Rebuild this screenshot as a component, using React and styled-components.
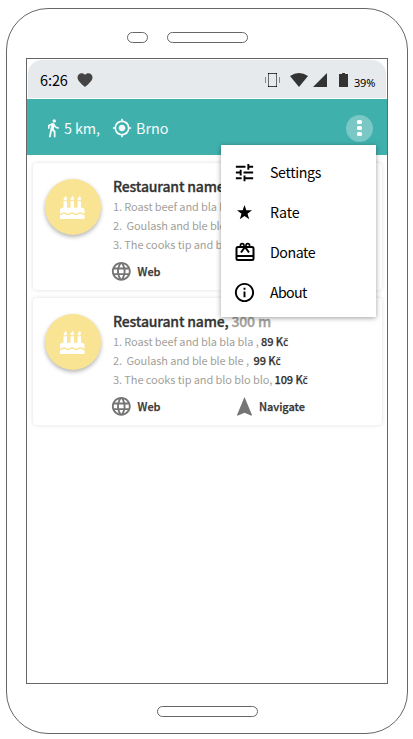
import React from "react";
import styled, { createGlobalStyle } from "styled-components";
import { MdDirectionsWalk, MdMyLocation, MdTune, MdInfoOutline, MdLanguage, MdFavorite } from "react-icons/md";
import { FaBirthdayCake } from "react-icons/fa";

const Global = createGlobalStyle`
  * { box-sizing: border-box; }
  body { margin: 0; background: #fff; font-family: "Source Sans Pro", "Noto Sans CJK SC", sans-serif; }
`;
const Phone = styled.main`
  width: 402px; height: 726px; margin: 8px 0 0 6px;
  border: 1px solid #666; border-radius: 42px;
  display: flex; flex-direction: column; align-items: center;
`;
const Speakers = styled.div`
  display: flex; gap: 19px; width: 100%; height: 49px; padding: 23px 0 0 119.5px;
`;
const Pill = styled.div`
  width: ${(p) => p.$w}px; height: 11px; border: 1px solid #666; border-radius: 6px;
`;
const Screen = styled.section`
  position: relative; width: 362px; height: 626px; border: 1px solid #666;
  display: flex; flex-direction: column; margin-bottom: 22px;
`;
const StatusBar = styled.header`
  height: 38px; margin: 1px 1px 1px; padding: 1px 10px 0 12px; background: #e6eaed;
  border-radius: 14px 14px 0 0; display: flex; align-items: center; color: #000;
`;
const Clock = styled.span`
  font-size: 14.5px; line-height: 20px; width: 36px; white-space: nowrap; letter-spacing: -0.1px;
`;
const StatusIcons = styled.div`
  margin-left: auto; display: flex; align-items: center; height: 20px;
`;
const Percent = styled.span`
  font: 11px/20px "Noto Sans", sans-serif; margin: 6px 0 0 6px; width: 22px;
  letter-spacing: -0.2px;
`;
const AppBar = styled.nav`
  height: 56px; background: #40b0ad; color: #f4fbfa; padding: 2px 14px 0 16px;
  display: flex; align-items: center; font-size: 14.4px; line-height: 20px;
`;
const Filter = styled.span`
  display: flex; align-items: center; gap: ${(p) => p.$gap}px; width: ${(p) => p.$w}px; white-space: nowrap;
  letter-spacing: ${(p) => p.$ls || 0}px;
`;
const MoreButton = styled.button`
  width: 27px; height: 27px; margin: 0 0 0 auto; padding: 0; border: 0; border-radius: 50%;
  background: #79c8c5; display: flex; flex-direction: column; align-items: center; justify-content: center; gap: 2px;
`;
const Dot = styled.i`
  width: 5px; height: 4px; border-radius: 1.5px; background: #fff;
`;
const List = styled.div`
  display: flex; flex-direction: column; gap: 8px; padding: 8px 5px 0 6px;
`;
const Card = styled.article`
  height: 127px; border-radius: 4px; background: #fff; box-shadow: 0 0 4px rgba(0,0,0,.13);
  padding: 15px 0 0 12px; display: flex; gap: 12px;
`;
const Avatar = styled.div`
  flex: none; width: 56px; height: 56px; margin-top: 1px; border-radius: 50%; background: #f9e494; color: #fff;
  box-shadow: 0 2px 4px rgba(0,0,0,.3); display: flex; align-items: center; justify-content: center;
`;
const Cake = styled(FaBirthdayCake)`
  width: 24.5px; height: 23.5px; margin: 1px 1px 0 0;
`;
const Details = styled.div`
  flex: 1; white-space: nowrap;
`;
const Name = styled.h2`
  margin: 0; font-size: 14px; line-height: 16px; height: 19px; font-weight: 500; color: #333;
  letter-spacing: -0.17px; -webkit-text-stroke: 0.3px currentColor;
`;
const Distance = styled.span`color: #a29f9a; -webkit-text-stroke: 0.3px currentColor;`;
const Meal = styled.p`
  margin: 0; font-size: 11px; line-height: 19px; height: 19px; color: #a29f9a; white-space: pre;
  letter-spacing: ${(p) => p.$ls}px;
`;
const Price = styled.b`
  color: #333; font-weight: 500; letter-spacing: -0.1px; -webkit-text-stroke: 0.25px currentColor;
`;
const Caron = styled.span`
  font: 600 10.5px/1 "Open Sans", "Noto Sans", sans-serif; -webkit-text-stroke: 0;
`;
const Actions = styled.div`
  display: flex; height: 20px; margin: 7px 0 0 -3px; color: #757575;
`;
const Action = styled.a`
  width: ${(p) => p.$w}px; display: flex; align-items: center; gap: ${(p) => p.$gap}px;
  font-size: 11px; line-height: 20px; font-weight: 500;
`;
const ActionText = styled.span`
  color: #333; -webkit-text-stroke: 0.25px currentColor; letter-spacing: -0.05px;
`;
const Menu = styled.div`
  position: absolute; left: 194px; top: 86px; width: 155px; height: 172px; padding-top: 7px;
  background: #fff; color: #000; box-shadow: 0 1px 5px rgba(0,0,0,.38);
`;
const MenuItem = styled.div`
  height: 40px; padding-left: 14px; display: flex; align-items: center; gap: 15px;
  font-size: 14.2px; line-height: 20px; letter-spacing: ${(p) => p.$ls}px;
`;
const MenuIcon = styled.span`
  flex: none; width: 20px; height: 22px; display: flex; align-items: center; justify-content: center;
  svg { flex: none; margin-left: -1px; }
`;

const Vibration = () => (
  <svg width="15" height="16" viewBox="0 0 15 16" fill="none" stroke="#666">
    <path d="M3.5 1v14M11.5 1v14" /><path d="M.5 5v6M14.5 5v6" stroke="#888" />
    <path d="M3 1.5h9M3 14.5h9" stroke="#444" />
    <path d="M3 1.5h1M11 1.5h1M3 14.5h1M11 14.5h1" stroke="#000" />
  </svg>
);
const Wifi = () => (
  <svg width="18" height="14" viewBox="0 0 18 14" fill="#333"><path d="M0 3Q9-2.8 18 3L9 14Z" /></svg>
);
const Signal = () => (
  <svg width="14" height="14" viewBox="0 0 14 14" fill="#333"><path d="M0 14 14 0v14Z" /></svg>
);
const Battery = () => (
  <svg width="9" height="14" viewBox="0 0 9 14" fill="#333"><path d="M3 0h3v1h3v13H0V1h3Z" /></svg>
);
const Star = () => (
  <svg width="15" height="15" viewBox="0 0 14 14"><path d="m7 0 1.7 5H14L9.8 8.2 11.4 13.3 7 10.2 2.6 13.3 4.2 8.2 0 5h5.3Z" /></svg>
);
const Gift = () => (
  <svg width="20" height="20" viewBox="0 0 20 20" fill="none" stroke="#000" strokeWidth="2">
    <rect x="1.5" y="5" width="17" height="13" rx="1.5" />
    <path d="M1 14h18" />
    <path d="M6 10.5 10 5l4 5.5" />
    <circle cx="7.2" cy="3.4" r="1.8" strokeWidth="1.6" /><circle cx="12.8" cy="3.4" r="1.8" strokeWidth="1.6" />
  </svg>
);
const Arrow = () => (
  <svg width="15" height="19" viewBox="0 0 15 19" fill="#757575"><path d="M7.5 0 15 18l-.5.7-7-3-7 3L0 18Z" /></svg>
);
const StatusGap = styled.span`width: ${(p) => p.$w}px;`;
const Currency = () => <>K<Caron>č</Caron></>;

function Restaurant() {
  return (
    <Card>
      <Avatar><Cake preserveAspectRatio="none" /></Avatar>
      <Details>
        <Name>Restaurant name, <Distance>300 m</Distance></Name>
        <Meal $ls={-0.1}>1. Roast beef and bla bla bla , <Price>89 <Currency /></Price></Meal>
        <Meal $ls={-0.12}>{"2.  Goulash and ble ble ble ,  "}<Price>99 <Currency /></Price></Meal>
        <Meal $ls={-0.09}>3. The cooks tip and blo blo blo, <Price>109 <Currency /></Price></Meal>
        <Actions>
          <Action $w={127} $gap={5}><MdLanguage size={22.6} /><ActionText>Web</ActionText></Action>
          <Action $w={90} $gap={7}><Arrow /><ActionText>Navigate</ActionText></Action>
        </Actions>
      </Details>
    </Card>
  );
}

const menu = [
  ["Settings", <MdTune size={23} />, -0.35],
  ["Rate", <Star />, 0],
  ["Donate", <Gift />, -0.45],
  ["About", <MdInfoOutline size={23} />, -0.65],
];

export default function App() {
  return (
    <>
      <Global />
      <Phone>
        <Speakers><Pill $w={21} /><Pill $w={81} /></Speakers>
        <Screen>
          <StatusBar>
            <Clock>6:26</Clock>
            <MdFavorite size={18} color="#444" />
            <StatusIcons>
              <Vibration /><StatusGap $w={10} />
              <Wifi /><StatusGap $w={5} />
              <Signal /><StatusGap $w={12} />
              <Battery /><Percent>39%</Percent>
            </StatusIcons>
          </StatusBar>
          <AppBar>
            <Filter $gap={1} $w={69} $ls={-0.1}><MdDirectionsWalk size={20} />5 km,</Filter>
            <Filter $gap={4} $w={80}><MdMyLocation size={20} />Brno</Filter>
            <MoreButton aria-label="More"><Dot /><Dot /><Dot /></MoreButton>
          </AppBar>
          <List><Restaurant /><Restaurant /></List>
          <Menu>
            {menu.map(([label, icon, ls]) => (
              <MenuItem key={label} $ls={ls}><MenuIcon>{icon}</MenuIcon>{label}</MenuItem>
            ))}
          </Menu>
        </Screen>
        <Pill $w={101} />
      </Phone>
    </>
  );
}
